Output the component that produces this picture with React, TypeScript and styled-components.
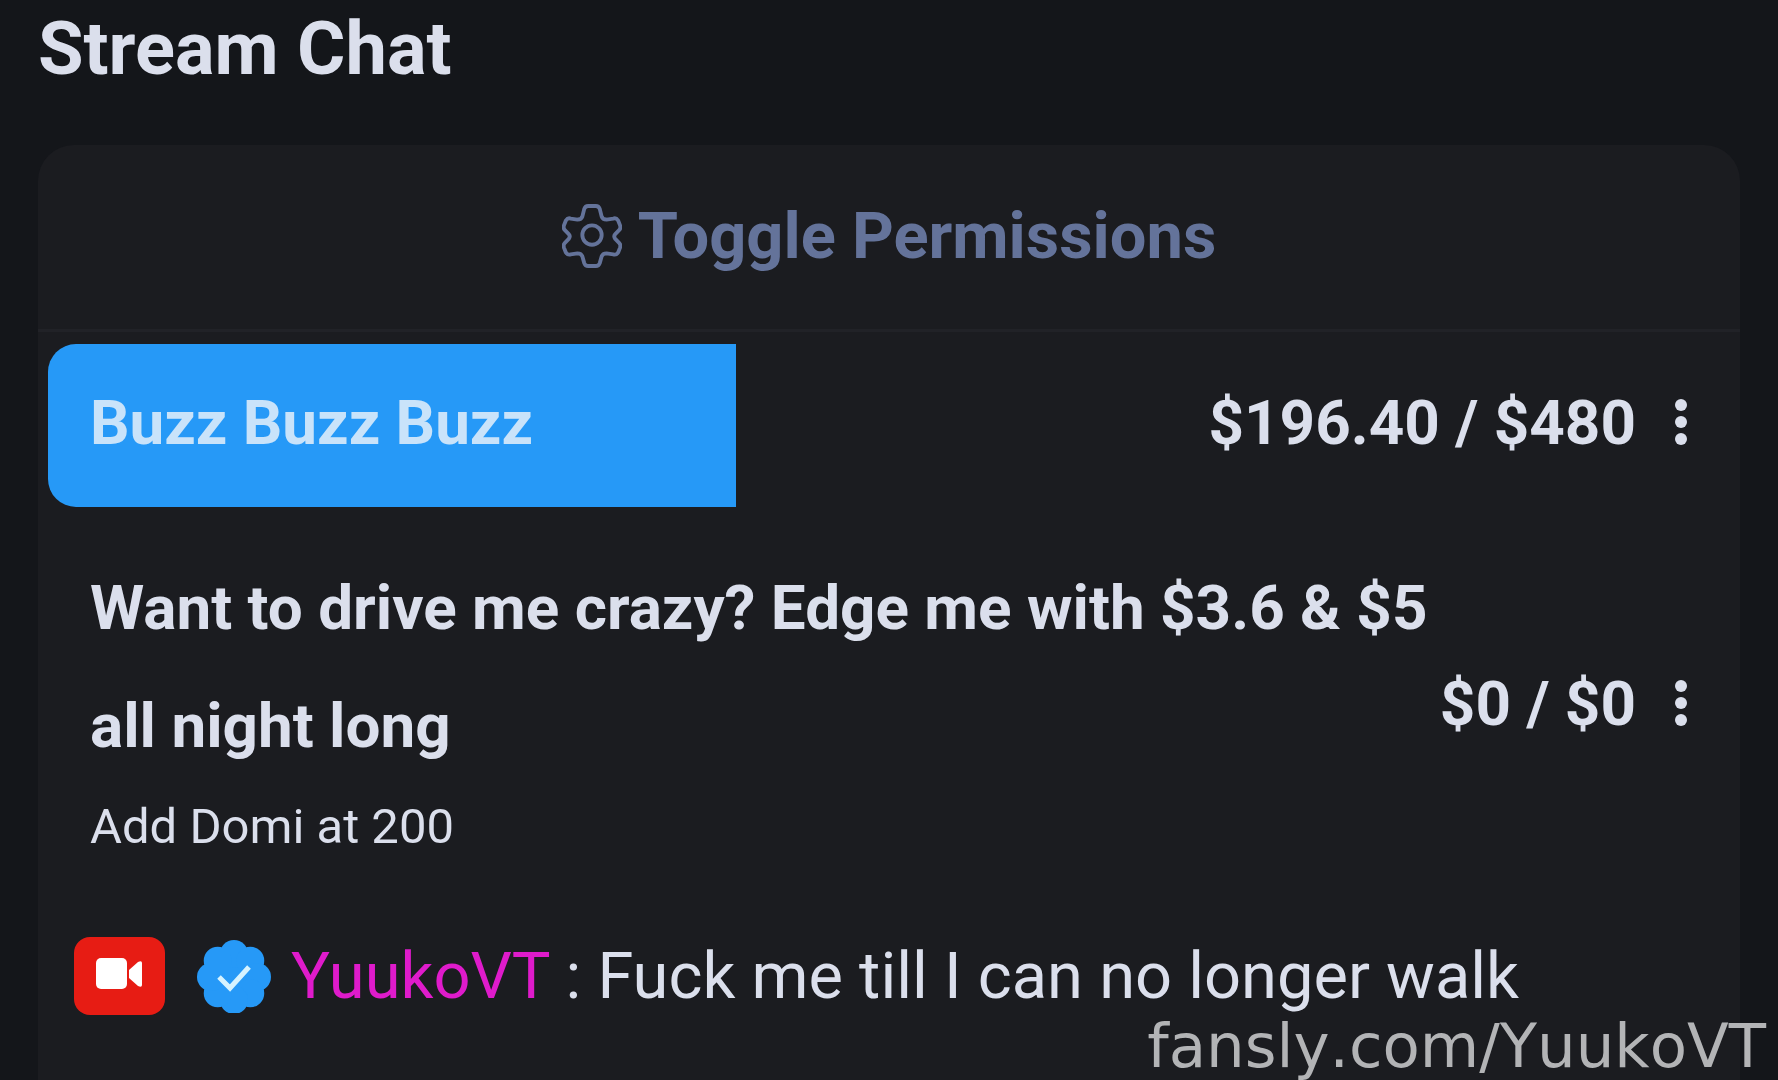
import React from 'react';
import styled, { createGlobalStyle } from 'styled-components';

const GlobalStyle = createGlobalStyle`
  * { box-sizing: border-box; }
  body {
    margin: 0;
    background: #14161a;
    color: #dbdfec;
    font-family: Roboto, "Liberation Sans", sans-serif;
    overflow: hidden;
  }
  button {
    border: 0;
    padding: 0;
    background: none;
    color: inherit;
    font: inherit;
    cursor: pointer;
  }
  svg { display: block; flex: none; }
`;

const Page = styled.main`
  display: flex;
  flex-direction: column;
  gap: 48px;
  height: 100vh;
  padding: 0 38px;
`;

const Title = styled.h1`
  margin: 0;
  font-size: 74px;
  font-weight: 700;
  line-height: 97px;
`;

const Card = styled.section`
  flex: 1;
  border-radius: 36px 36px 0 0;
  background: #1b1c20;
`;

const PermissionsButton = styled.button`
  display: flex;
  align-items: center;
  justify-content: center;
  gap: 16px;
  width: 100%;
  height: 187px;
  padding-bottom: 2px;
  border-bottom: 3px solid #212227;
  color: #64739a;
  font-size: 65px;
  font-weight: 700;
`;

const Goals = styled.div`
  display: flex;
  flex-direction: column;
  gap: 22px;
  padding: 12px 10px 0;
`;

const Goal = styled.article<{ $percent: number }>`
  display: flex;
  align-items: center;
  justify-content: space-between;
  padding: 20px 42px 25px;
  border-radius: 28px;
  background: linear-gradient(#2699f7, #2699f7) no-repeat 0 0 / ${(p) => p.$percent}% 100%;
`;

const GoalText = styled.div`
  max-width: 1350px;
`;

const GoalName = styled.h2<{ $onBar?: boolean }>`
  margin: 0;
  color: ${(p) => (p.$onBar ? '#c9e3fa' : 'inherit')};
  font-size: 62px;
  font-weight: 700;
  line-height: 118px;
`;

const GoalNote = styled.p`
  margin: 10px 0 0;
  font-size: 49px;
  line-height: 64px;
`;

const GoalStatus = styled.div`
  display: flex;
  align-items: center;
  gap: 38px;
  font-size: 62px;
  font-weight: 700;
  line-height: 118px;
  white-space: nowrap;
`;

const Message = styled.div`
  display: flex;
  align-items: center;
  padding: 44px 36px 0;
  font-size: 65px;
  line-height: 96px;
`;

const LiveBadge = styled.span`
  display: flex;
  align-items: center;
  justify-content: center;
  width: 91px;
  height: 78px;
  margin-right: 32px;
  padding-bottom: 4px;
  border-radius: 16px;
  background: #e71c14;
`;

const MessageText = styled.p`
  margin: 0 0 0 20px;
`;

const UserLink = styled.a`
  color: #df1bcb;
  text-decoration: none;
`;

const Watermark = styled.div`
  position: fixed;
  right: 12px;
  bottom: 0;
  color: #b3b4b6;
  font-family: "DejaVu Sans", sans-serif;
  font-size: 61px;
  font-kerning: none;
  line-height: 68px;
`;

const GearIcon = () => (
  <svg width="60" height="64" viewBox="0 0 62 66" fill="none" stroke="currentColor" strokeWidth="4" strokeLinejoin="round" aria-hidden="true">
    <path d="M27 2h8q3 0 4 3l2 8q1 3 5 3l7-1q3-1 5 2l2 5q1 3-1 5l-4 4q-2 2 0 5l4 4q2 2 1 5l-2 5q-2 3-5 2l-7-1q-4 0-5 3l-2 7q-1 3-4 3h-8q-3 0-4-3l-2-7q-1-3-5-3l-7 1q-3 1-5-2l-2-5q-1-3 1-5l4-4q2-3 0-5l-4-4q-2-2-1-5l2-5q2-3 5-2l7 1q4 0 5-3l2-8q1-3 4-3z" />
    <circle cx="31" cy="32" r="10" />
  </svg>
);

const DotsIcon = () => (
  <svg width="14" height="48" viewBox="0 0 14 48" fill="currentColor" aria-hidden="true">
    <circle cx="7" cy="6" r="6" />
    <circle cx="7" cy="23" r="6" />
    <circle cx="7" cy="40" r="6" />
  </svg>
);

const CameraIcon = () => (
  <svg width="48" height="32" viewBox="0 0 48 32" fill="#fff" aria-hidden="true">
    <rect width="31" height="31" rx="5" />
    <path d="M33 12l9-8q4-2 4 1v22q0 3-4 1l-9-8z" />
  </svg>
);

const VerifiedIcon = () => (
  <svg width="74" height="74" viewBox="0 0 74 74" role="img" aria-label="Verified">
    <g fill="#2699f7">
      <circle cx="37" cy="38" r="30" />
      {[0, 45, 90, 135, 180, 225, 270, 315].map((angle) => (
        <circle key={angle} cx="37" cy="15" r="14" transform={`rotate(${angle} 37 38)`} />
      ))}
    </g>
    <path d="M22 38l11 11 19-21" fill="none" stroke="#d6f3ff" strokeWidth="5" />
  </svg>
);

type GoalData = { name: string; note?: string; raised: string; target: string; percent: number };

const goals: GoalData[] = [
  { name: 'Buzz Buzz Buzz', raised: '$196.40', target: '$480', percent: (196.4 / 480) * 100 },
  {
    name: 'Want to drive me crazy? Edge me with $3.6 & $5 all night long',
    note: 'Add Domi at 200',
    raised: '$0',
    target: '$0',
    percent: 0,
  },
];

export default function App() {
  return (
    <>
      <GlobalStyle />
      <Page>
        <Title>Stream Chat</Title>
        <Card>
          <PermissionsButton type="button">
            <GearIcon />
            Toggle Permissions
          </PermissionsButton>
          <Goals>
            {goals.map((goal) => (
              <Goal key={goal.name} $percent={goal.percent}>
                <GoalText>
                  <GoalName $onBar={goal.percent > 0}>{goal.name}</GoalName>
                  {goal.note && <GoalNote>{goal.note}</GoalNote>}
                </GoalText>
                <GoalStatus>
                  <span>{goal.raised} / {goal.target}</span>
                  <button type="button" aria-label="Goal options">
                    <DotsIcon />
                  </button>
                </GoalStatus>
              </Goal>
            ))}
          </Goals>
          <Message>
            <LiveBadge>
              <CameraIcon />
            </LiveBadge>
            <VerifiedIcon />
            <MessageText>
              <UserLink href="#YuukoVT">YuukoVT</UserLink> : Fuck me till I can no longer walk
            </MessageText>
          </Message>
        </Card>
      </Page>
      <Watermark>fansly.com/YuukoVT</Watermark>
    </>
  );
}
